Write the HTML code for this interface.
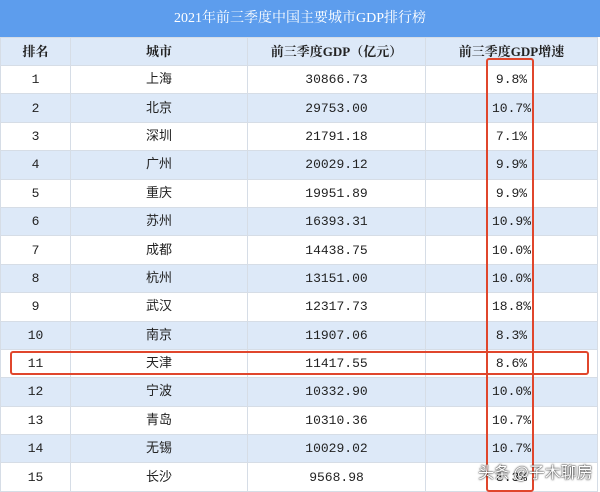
<!DOCTYPE html>
<html><head><meta charset="utf-8"><style>
body{margin:0;width:600px;height:492px;overflow:hidden;background:#fff;position:relative;font-family:"Liberation Serif","Noto Serif CJK SC",serif;}
.title{position:absolute;left:0;top:0;width:600px;height:37px;background:#5d9ded;color:#fff;text-align:center;line-height:37px;font-size:14px;}
table{position:absolute;left:0;top:37px;width:597px;border-collapse:collapse;table-layout:fixed;}
td{height:27.4px;padding:0;border:1px solid #d6dde6;text-align:center;font-size:13px;line-height:13px;vertical-align:middle;color:#222;font-family:"Liberation Mono","Noto Sans CJK SC",monospace;}
td div{display:block;height:27px;line-height:27px;transform:translateY(-2px);}
td:nth-child(2){font-family:"Noto Sans CJK SC",sans-serif;}
tr.h td{font-weight:bold;font-family:"Liberation Serif","Noto Serif CJK SC",serif;background:#dde9f8;height:27px;}
tr:nth-child(odd):not(.h) td{background:#dde9f8;}
.box{position:absolute;border:2px solid #e0462c;border-radius:3px;}
.wm{position:absolute;left:478px;top:462px;color:#fff;font-size:16px;line-height:18px;font-family:"Noto Sans CJK SC",sans-serif;text-shadow:0 0 2px #333,0 0 1px #000;}
</style></head><body>
<div class="title">2021年前三季度中国主要城市GDP排行榜</div>
<table>
<colgroup><col style="width:70px"><col style="width:177px"><col style="width:178px"><col style="width:172px"></colgroup>
<tr class="h"><td>排名</td><td>城市</td><td>前三季度GDP（亿元）</td><td>前三季度GDP增速</td></tr>
<tr><td>1</td><td><div>上海</div></td><td>30866.73</td><td>9.8%</td></tr>
<tr><td>2</td><td><div>北京</div></td><td>29753.00</td><td>10.7%</td></tr>
<tr><td>3</td><td><div>深圳</div></td><td>21791.18</td><td>7.1%</td></tr>
<tr><td>4</td><td><div>广州</div></td><td>20029.12</td><td>9.9%</td></tr>
<tr><td>5</td><td><div>重庆</div></td><td>19951.89</td><td>9.9%</td></tr>
<tr><td>6</td><td><div>苏州</div></td><td>16393.31</td><td>10.9%</td></tr>
<tr><td>7</td><td><div>成都</div></td><td>14438.75</td><td>10.0%</td></tr>
<tr><td>8</td><td><div>杭州</div></td><td>13151.00</td><td>10.0%</td></tr>
<tr><td>9</td><td><div>武汉</div></td><td>12317.73</td><td>18.8%</td></tr>
<tr><td>10</td><td><div>南京</div></td><td>11907.06</td><td>8.3%</td></tr>
<tr><td>11</td><td><div>天津</div></td><td>11417.55</td><td>8.6%</td></tr>
<tr><td>12</td><td><div>宁波</div></td><td>10332.90</td><td>10.0%</td></tr>
<tr><td>13</td><td><div>青岛</div></td><td>10310.36</td><td>10.7%</td></tr>
<tr><td>14</td><td><div>无锡</div></td><td>10029.02</td><td>10.7%</td></tr>
<tr><td>15</td><td><div>长沙</div></td><td>9568.98</td><td>8.3%</td></tr>
</table>
<div class="box" style="left:486px;top:58px;width:44px;height:430px;"></div>
<div class="box" style="left:10px;top:351px;width:575px;height:20px;"></div>
<div class="wm">头条 @子木聊房</div>
</body></html>
